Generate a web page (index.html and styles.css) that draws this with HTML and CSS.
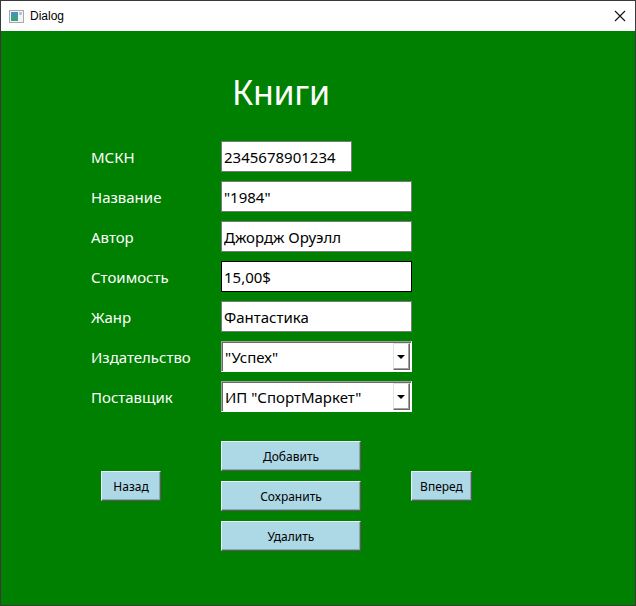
FILE: index.html
```html
<!DOCTYPE html>
<html lang="ru">
<head>
<meta charset="utf-8">
<title>Dialog</title>
<link rel="stylesheet" href="styles.css">
</head>
<body>
<div class="window">
  <div class="titlebar">
    <svg class="app-icon" width="15" height="13" viewBox="0 0 15 13">
      <rect x="0.5" y="0.5" width="14" height="12" fill="#f4f4f4" stroke="#a8a8a8"/>
      <defs>
        <linearGradient id="g" x1="0" y1="0" x2="0" y2="1">
          <stop offset="0" stop-color="#4a8fc8"/>
          <stop offset="1" stop-color="#3aa56a"/>
        </linearGradient>
      </defs>
      <rect x="2" y="2" width="7" height="9" fill="url(#g)"/>
      <rect x="10" y="2" width="3" height="3" fill="#b8c8d8"/>
    </svg>
    <span class="title-text">Dialog</span>
    <svg class="close" width="12" height="12" viewBox="0 0 12 12">
      <path d="M1 1 L11 11 M11 1 L1 11" stroke="#111" stroke-width="1.1" fill="none"/>
    </svg>
  </div>
  <div class="client">
    <h1 class="heading">Книги</h1>
    <div class="form">
      <label class="label">МСКН</label>
      <input class="field field-short" type="text" value="2345678901234" readonly>
      <label class="label">Название</label>
      <input class="field" type="text" value="&quot;1984&quot;" readonly>
      <label class="label">Автор</label>
      <input class="field" type="text" value="Джордж Оруэлл" readonly>
      <label class="label">Стоимость</label>
      <input class="field field-active" type="text" value="15,00$" readonly>
      <label class="label label-genre">Жанр</label>
      <input class="field" type="text" value="Фантастика" readonly>
      <label class="label">Издательство</label>
      <div class="combo"><span class="combo-text">"Успех"</span><span class="combo-btn"><span class="arrow"></span></span></div>
      <label class="label">Поставщик</label>
      <div class="combo"><span class="combo-text">ИП "СпортМаркет"</span><span class="combo-btn"><span class="arrow"></span></span></div>
    </div>
    <div class="actions">
      <button class="btn btn-side btn-back">Назад</button>
      <div class="middle">
        <button class="btn btn-wide">Добавить</button>
        <button class="btn btn-wide">Сохранить</button>
        <button class="btn btn-wide">Удалить</button>
      </div>
      <button class="btn btn-side btn-next">Вперед</button>
    </div>
  </div>
</div>
</body>
</html>
```
FILE: styles.css
```css
html, body {
  margin: 0;
  padding: 0;
  background: #ffffff;
}
.window {
  width: 636px;
  height: 606px;
  box-sizing: border-box;
  border: 1px solid #3a3a3a;
  display: flex;
  flex-direction: column;
  font-family: "Noto Sans", "Open Sans", sans-serif;
}
.titlebar {
  height: 30px;
  flex: 0 0 30px;
  background: #ffffff;
  display: flex;
  align-items: center;
}
.app-icon {
  margin-left: 8px;
  margin-top: 1px;
}
.title-text {
  margin-left: 6px;
  font-size: 12px;
  color: #000;
  font-family: "Liberation Sans", "Noto Sans", sans-serif;
}
.close {
  margin-left: auto;
  margin-right: 9px;
}
.client {
  flex: 1;
  background: #008000;
}
.heading {
  margin: 0;
  padding: 41px 0 0 231px;
  font-size: 34px;
  line-height: 40px;
  letter-spacing: -0.3px;
  font-weight: normal;
  color: #ffffff;
}
.form {
  margin-top: 29px;
  padding-left: 90px;
  display: grid;
  grid-template-columns: 130px 191px;
  grid-auto-rows: 31px;
  row-gap: 9px;
  align-items: center;
}
.label {
  color: #ffffff;
  font-size: 15px;
}
.field {
  box-sizing: border-box;
  height: 31px;
  width: 191px;
  margin: 0;
  padding: 0 2px;
  border: 1px solid #7a7a7a;
  background: #ffffff;
  color: #000;
  font-family: "Noto Sans", sans-serif;
  font-size: 15px;
  outline: none;
}
.field-short {
  width: 131px;
}
.field-active {
  border-color: #000000;
}
.combo {
  box-sizing: border-box;
  height: 31px;
  width: 191px;
  background: #ffffff;
  border-top: 1px solid #a0a0a0;
  border-left: 1px solid #a0a0a0;
  border-right: 1px solid #ffffff;
  border-bottom: 1px solid #ffffff;
  box-shadow: inset 1px 1px 0 #696969;
  display: flex;
  align-items: stretch;
  padding: 1px;
}
.combo-text {
  flex: 1;
  display: flex;
  align-items: center;
  padding-left: 2px;
  font-size: 15px;
  color: #000;
}
.combo-btn {
  box-sizing: border-box;
  width: 17px;
  background: #ffffff;
  border-top: 1px solid #e3e3e3;
  border-left: 1px solid #e3e3e3;
  border-right: 1px solid #696969;
  border-bottom: 1px solid #696969;
  box-shadow: inset -1px -1px 0 #a0a0a0;
  display: flex;
  align-items: center;
  justify-content: center;
}
.arrow {
  width: 0;
  height: 0;
  border-left: 4px solid transparent;
  border-right: 4px solid transparent;
  border-top: 4px solid #000;
  margin-left: -1px;
  margin-top: 1px;
}
.actions {
  margin-top: 29px;
  padding-left: 100px;
  display: flex;
  align-items: flex-start;
}
.middle {
  display: flex;
  flex-direction: column;
  gap: 10px;
  margin-left: 60px;
  margin-right: 50px;
}
.btn {
  box-sizing: border-box;
  height: 30px;
  margin: 0;
  padding: 0;
  background: #add8e6;
  border-top: 1px solid #eef7fa;
  border-left: 1px solid #eef7fa;
  border-right: 1px solid #5a5a5a;
  border-bottom: 1px solid #5a5a5a;
  box-shadow: inset -1px -1px 0 #8aa6b0;
  color: #000;
  font-family: "Noto Sans", sans-serif;
  font-size: 12px;
}
.btn-side {
  margin-top: 30px;
}
.btn-back {
  width: 60px;
}
.btn-next {
  width: 61px;
}
.btn-wide {
  width: 140px;
}
```
